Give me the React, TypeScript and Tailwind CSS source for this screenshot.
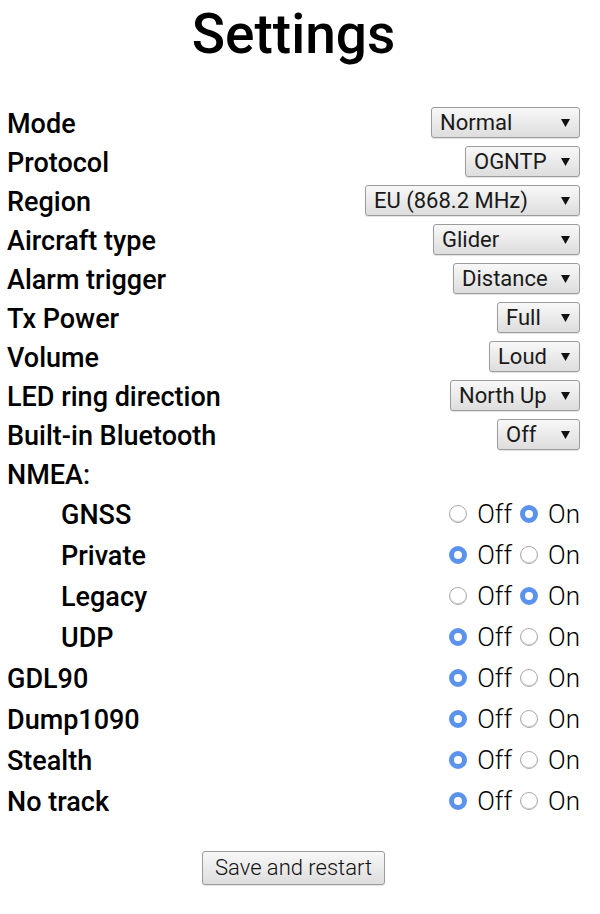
import React from "react";

type SelRow = { label: string; value: string; w: string };

const selects: SelRow[] = [
  { label: "Mode", value: "Normal", w: "w-[149px]" },
  { label: "Protocol", value: "OGNTP", w: "w-[115px]" },
  { label: "Region", value: "EU (868.2 MHz)", w: "w-[215px]" },
  { label: "Aircraft type", value: "Glider", w: "w-[147px]" },
  { label: "Alarm trigger", value: "Distance", w: "w-[127px]" },
  { label: "Tx Power", value: "Full", w: "w-[83px]" },
  { label: "Volume", value: "Loud", w: "w-[91px]" },
  { label: "LED ring direction", value: "North Up", w: "w-[130px]" },
  { label: "Built-in Bluetooth", value: "Off", w: "w-[83px]" },
];

type RadioRow = { label: string; on: boolean; nested: boolean };

const radios: RadioRow[] = [
  { label: "GNSS", on: true, nested: true },
  { label: "Private", on: false, nested: true },
  { label: "Legacy", on: true, nested: true },
  { label: "UDP", on: false, nested: true },
  { label: "GDL90", on: false, nested: false },
  { label: "Dump1090", on: false, nested: false },
  { label: "Stealth", on: false, nested: false },
  { label: "No track", on: false, nested: false },
];

function Radio({ checked }: { checked: boolean }) {
  return checked ? (
    <span className="block w-[18px] h-[18px] rounded-full border-[5px] border-[#5b93ec] bg-white" />
  ) : (
    <span className="block w-[18px] h-[18px] rounded-full border border-[#aaaaaa] bg-white shadow-[inset_0_-1px_0_#d0d0d0]" />
  );
}

function Select({ value, w }: { value: string; w: string }) {
  return (
    <div
      className={`${w} h-[31px] flex items-center justify-between border border-[#9c9c9c] rounded-[3px] bg-linear-to-b from-[#f8f8f8] to-[#dddddd] pl-[8px] pr-[9px] text-[22px] font-normal text-[#1a1a1a] shadow-[0_1px_1px_rgba(0,0,0,0.12)]`}
    >
      <span className="leading-none whitespace-nowrap">{value}</span>
      <svg width="9" height="8" viewBox="0 0 9 8" className="shrink-0">
        <polygon points="0,0 9,0 4.5,8" fill="#111" />
      </svg>
    </div>
  );
}

export default function App() {
  return (
    <div className="w-[600px] min-h-[914px] bg-white text-black font-['Roboto',sans-serif]">
      <div className="w-[587px] px-[7px]">
        <h1 className="text-center text-[55px] leading-[56px] font-medium pt-[6px] mb-[41px]">
          Settings
        </h1>
        {selects.map((s) => (
          <div key={s.label} className="h-[39px] flex items-center justify-between">
            <span className="text-[27px] font-medium leading-none pt-[3px]">{s.label}</span>
            <Select value={s.value} w={s.w} />
          </div>
        ))}
        <div className="h-[39px] flex items-center">
          <span className="text-[27px] font-medium leading-none pt-[3px]">NMEA:</span>
        </div>
        {radios.map((r) => (
          <div key={r.label} className="h-[41px] flex items-center justify-between">
            <span
              className={`text-[27px] font-medium leading-none pt-[3px] ${r.nested ? "pl-[54px]" : ""}`}
            >
              {r.label}
            </span>
            <div className="flex items-center text-[26px] font-light leading-none">
              <Radio checked={!r.on} />
              <span className="ml-[10px]">Off</span>
              <span className="ml-[8px]">
                <Radio checked={r.on} />
              </span>
              <span className="ml-[10px]">On</span>
            </div>
          </div>
        ))}
        <div className="flex justify-center mt-[30px]">
          <button className="w-[183px] h-[34px] border border-[#9c9c9c] rounded-[3px] bg-linear-to-b from-[#f8f8f8] to-[#dddddd] text-[22px] font-light text-[#111] leading-none shadow-[0_1px_1px_rgba(0,0,0,0.12)]">
            Save and restart
          </button>
        </div>
      </div>
    </div>
  );
}
